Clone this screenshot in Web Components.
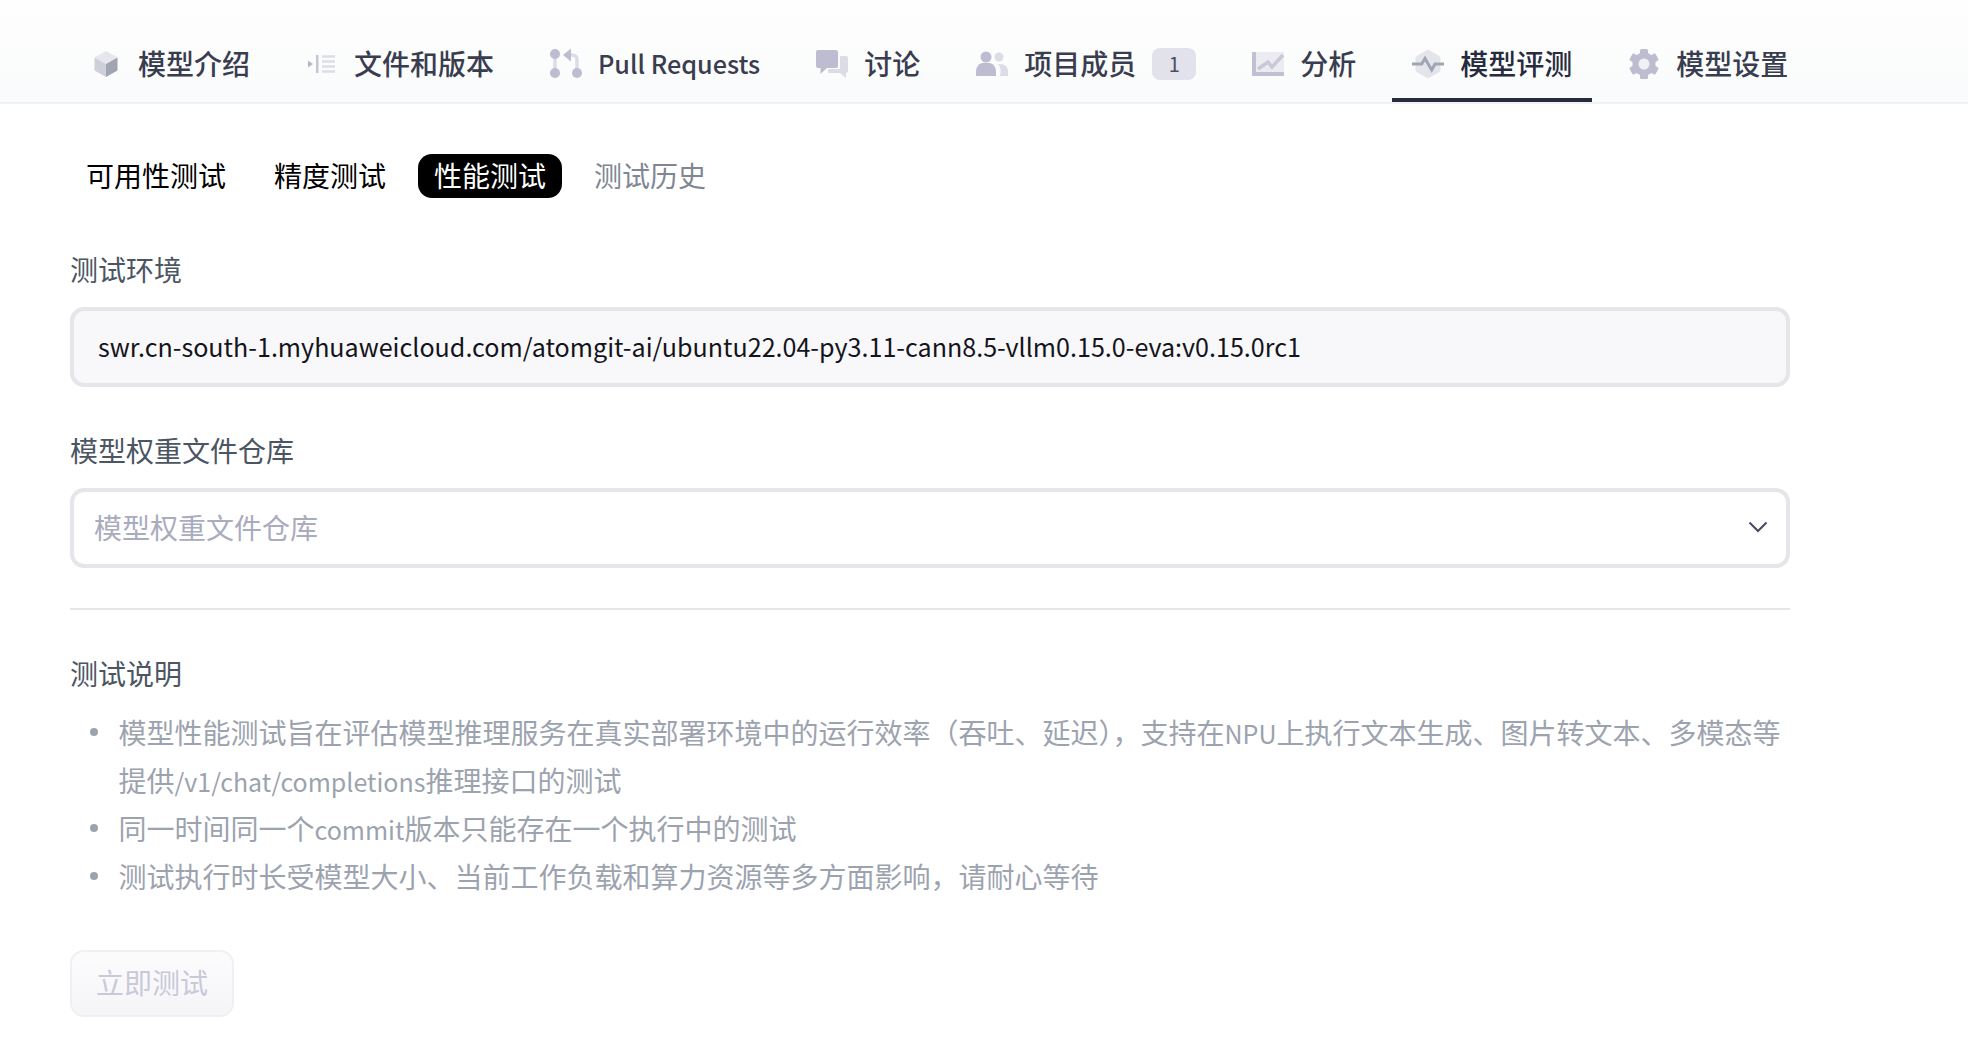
<!DOCTYPE html>
<html lang="zh-CN">
<head>
<meta charset="utf-8">
<title>模型评测</title>
<style>
  body {
    margin: 0;
    background: #fff;
    font-family: "Noto Sans CJK SC", "Noto Sans", sans-serif;
    font-size: 28px;
  }
  svg { display: block; }
  /* latin runs sit smaller than the CJK around them */
  .lat { font-size: 25px; line-height: 1; }
  nav-tab .lat { font-size: 25.2px; vertical-align: 1px; }
</style>
</head>
<body>

<nav-bar>
  <nav-tab>
    <svg slot="icon" width="32" height="32" viewBox="0 0 32 32">
      <path d="M16 3 27.5 9.5 16 16 4.500 9.500Z" fill="#e6e7ec"/>
      <path d="M4.500 9.500 16 16V29L4.500 22.500Z" fill="#cdd0d9"/>
      <path d="M27.500 9.500 16 16V29L27.500 22.500Z" fill="#a0a5b2"/>
    </svg>
    模型介绍
  </nav-tab>
  <nav-tab>
    <svg slot="icon" width="32" height="32" viewBox="0 0 32 32">
      <path d="M2 12.500 7 16 2 19.500Z" fill="#b4b6c4"/>
      <rect x="10" y="7" width="2.500" height="18" fill="#c4c5d3"/>
      <path d="M16 8.500H29M16 13.500H29M16 18.500H29M16 23.500H29" stroke="#dcdde6" stroke-width="2.500"/>
    </svg>
    文件和版本
  </nav-tab>
  <nav-tab>
    <svg slot="icon" width="32" height="32" viewBox="0 0 32 32">
      <path d="M5 6V25" stroke="#dcdce6" stroke-width="3.500"/>
      <path d="M18 7H22Q27 7 27 12V25" fill="none" stroke="#dcdce6" stroke-width="3.500"/>
      <circle cx="5" cy="6" r="5" fill="#bdbcd0"/>
      <circle cx="5" cy="25" r="5" fill="#bdbcd0"/>
      <circle cx="27" cy="25" r="5" fill="#bdbcd0"/>
      <path d="M13 7 21 0.500V13.500Z" fill="#bdbcd0"/>
    </svg>
    <span class="lat">Pull Requests</span>
  </nav-tab>
  <nav-tab>
    <svg slot="icon" width="32" height="32" viewBox="0 0 32 32">
      <path d="M24 8H30Q32 8 32 10V23Q32 25 30 25H30V30L24 25H12V21H24Z" fill="#dcdce6"/>
      <path d="M2 2H20Q22 2 22 4V18Q22 20 20 20H11L4.500 26V20H2Q0 20 0 18V4Q0 2 2 2Z" fill="#bdbcd0"/>
    </svg>
    讨论
  </nav-tab>
  <nav-tab badge="1">
    <svg slot="icon" width="32" height="32" viewBox="0 0 32 32">
      <circle cx="23" cy="9" r="4.500" fill="#dcdce6"/>
      <path d="M22 16Q32 15 32 24V28H24Q26 20 22 16Z" fill="#dcdce6"/>
      <circle cx="10" cy="9" r="5.500" fill="#bdbcd0"/>
      <path d="M0 28V24Q0 17 6 15H14Q20 17 20 24V28Z" fill="#bdbcd0"/>
    </svg>
    项目成员
  </nav-tab>
  <nav-tab>
    <svg slot="icon" width="32" height="32" viewBox="0 0 32 32">
      <rect x="3" y="4" width="29" height="20" fill="#ecebf2"/>
      <path d="M0 4H4V24H32V28H0Z" fill="#c0bfd3"/>
      <path d="M6 21 16 14 20 19 31 7" fill="none" stroke="#c9c8d9" stroke-width="3.500"/>
    </svg>
    分析
  </nav-tab>
  <nav-tab active>
    <svg slot="icon" width="32" height="32" viewBox="0 0 32 32">
      <path d="M16 2 28 9V23L16 30 4 23V9Z" fill="#e4e5ea" stroke="#e4e5ea" stroke-linejoin="round"/>
      <path d="M0 16H9.700L13 10.500 19.700 22 23 16H32" fill="none" stroke="#a0a5b2" stroke-width="3"/>
    </svg>
    模型评测
  </nav-tab>
  <nav-tab>
    <svg slot="icon" width="32" height="32" viewBox="0 0 32 32">
      <g fill="#bdbcd0">
        <rect x="12" y="1" width="8" height="30" rx="1.500"/>
        <rect x="12" y="1" width="8" height="30" rx="1.500" transform="rotate(60 16 16)"/>
        <rect x="12" y="1" width="8" height="30" rx="1.500" transform="rotate(120 16 16)"/>
        <circle cx="16" cy="16" r="11.500"/>
      </g>
      <circle cx="16" cy="16" r="5.500" fill="#f0f0f5"/>
    </svg>
    模型设置
  </nav-tab>
</nav-bar>

<eval-panel>
  <pill-tabs>
    <pill-tab>可用性测试</pill-tab>
    <pill-tab>精度测试</pill-tab>
    <pill-tab active>性能测试</pill-tab>
    <pill-tab muted>测试历史</pill-tab>
  </pill-tabs>

  <form-field label="测试环境">
    <text-box>swr.cn-south-1.myhuaweicloud.com/atomgit-ai/ubuntu22.04-py3.11-cann8.5-vllm0.15.0-eva:v0.15.0rc1</text-box>
  </form-field>

  <form-field label="模型权重文件仓库">
    <select-box placeholder="模型权重文件仓库"></select-box>
  </form-field>

  <note-list label="测试说明">
    <note-item>模型性能测试旨在评估模型推理服务在真实部署环境中的运行效率（吞吐、延迟），支持在<span class="lat">NPU</span>上执行文本生成、图片转文本、多模态等<br>提供<span class="lat">/v1/chat/completions</span>推理接口的测试</note-item>
    <note-item>同一时间同一个<span class="lat">commit</span>版本只能存在一个执行中的测试</note-item>
    <note-item>测试执行时长受模型大小、当前工作负载和算力资源等多方面影响，请耐心等待</note-item>
  </note-list>

  <action-button>立即测试</action-button>
</eval-panel>

<script>
class BaseElement extends HTMLElement {
  constructor() {
    super();
    this.attachShadow({ mode: 'open' });
  }

  connectedCallback() {
    this.render();
  }
}

class NavBar extends BaseElement {
  render() {
    this.shadowRoot.innerHTML = `
      <style>
        :host {
          display: flex;
          gap: 16px;
          height: 102px;
          box-sizing: content-box;
          padding-left: 70px;
          background: linear-gradient(#fefefe, #fafbfc);
          border-bottom: 2px solid #f1f2f5;
        }
      </style>
      <slot></slot>
    `;
  }
}

class NavTab extends BaseElement {
  render() {
    const badge = this.getAttribute('badge');

    this.shadowRoot.innerHTML = `
      <style>
        :host {
          display: flex;
          align-items: center;
          box-sizing: border-box;
          height: 102px;
          padding: 26px 20px 0;
          white-space: nowrap;
          font-size: 28px;
          font-weight: 500;
          color: #3a3c50;
        }
        :host([active]) {
          color: #262b3d;
          box-shadow: inset 0 -4px 0 #262b3d;
        }
        .icon { width: 32px; height: 32px; margin-right: 16px; flex: none; }
        .text { padding-bottom: 2px; }
        .badge {
          width: 44px;
          height: 32px;
          margin-left: 16px;
          border-radius: 8px;
          background: #e2e2ec;
          color: #4a4c60;
          font-size: 20px;
          font-weight: 400;
          line-height: 32px;
          text-align: center;
        }
      </style>
      <span class="icon"><slot name="icon"></slot></span>
      <span class="text"><slot></slot></span>
      ${badge ? `<span class="badge">${badge}</span>` : ''}
    `;
  }
}

class EvalPanel extends BaseElement {
  render() {
    this.shadowRoot.innerHTML = `
      <style>
        :host {
          display: flex;
          flex-direction: column;
          align-items: stretch;
          width: 1720px;
          padding: 50px 0 0 70px;
        }
      </style>
      <slot></slot>
    `;
  }
}

class PillTabs extends BaseElement {
  render() {
    this.shadowRoot.innerHTML = `
      <style>
        :host { display: flex; gap: 16px; margin-bottom: 52px; }
      </style>
      <slot></slot>
    `;
  }
}

class PillTab extends BaseElement {
  render() {
    this.shadowRoot.innerHTML = `
      <style>
        :host {
          display: block;
          height: 44px;
          padding: 0 16px;
          border-radius: 14px;
          font-size: 28px;
          line-height: 42px;
          color: #000;
        }
        :host([active]) { background: #000; color: #fff; }
        :host([muted]) { color: #7f8794; }
      </style>
      <slot></slot>
    `;
  }
}

class FormField extends BaseElement {
  render() {
    const label = this.getAttribute('label') || '';

    this.shadowRoot.innerHTML = `
      <style>
        :host { display: block; margin-bottom: 44px; }
        .label {
          height: 40px;
          margin-bottom: 17px;
          font-size: 28px;
          line-height: 38px;
          color: #4b5563;
        }
      </style>
      <div class="label">${label}</div>
      <slot></slot>
    `;
  }
}

class TextBox extends BaseElement {
  render() {
    this.shadowRoot.innerHTML = `
      <style>
        :host {
          display: block;
          box-sizing: border-box;
          height: 80px;
          padding: 0 24px;
          border: 4px solid #e5e5ea;
          border-radius: 14px;
          background: #f8f8fa;
          font-size: 25.08px;
          line-height: 70px;
          color: #14141c;
          white-space: nowrap;
        }
      </style>
      <slot></slot>
    `;
  }
}

class SelectBox extends BaseElement {
  render() {
    const placeholder = this.getAttribute('placeholder') || '';

    this.shadowRoot.innerHTML = `
      <style>
        :host {
          display: flex;
          align-items: center;
          justify-content: space-between;
          box-sizing: border-box;
          height: 80px;
          margin-bottom: -4px;
          padding: 0 18px 0 20px;
          border: 4px solid #e5e5ea;
          border-radius: 14px;
          background: #fff;
          font-size: 28px;
          color: #a9abbe;
        }
        span { padding-bottom: 2px; }
        svg { margin-bottom: 2px; }
      </style>
      <span>${placeholder}</span>
      <svg width="20" height="12" viewBox="0 0 20 12">
        <path d="M1.500 1.500 10 10 18.500 1.500" fill="none" stroke="#4a4a5e" stroke-width="2"/>
      </svg>
    `;
  }
}

class NoteList extends BaseElement {
  render() {
    const label = this.getAttribute('label') || '';

    this.shadowRoot.innerHTML = `
      <style>
        :host {
          display: block;
          margin-bottom: 50px;
          border-top: 2px solid #e5e5ea;
          padding-top: 44px;
        }
        .label {
          height: 40px;
          margin-bottom: 14px;
          font-size: 28px;
          line-height: 38px;
          color: #4b5563;
        }
      </style>
      <div class="label">${label}</div>
      <slot></slot>
    `;
  }
}

class NoteItem extends BaseElement {
  render() {
    this.shadowRoot.innerHTML = `
      <style>
        :host {
          display: grid;
          grid-template-columns: 48.5px 1fr;
          font-size: 28px;
          line-height: 48px;
          color: #9ca3af;
        }
        .dot {
          width: 8px;
          height: 8px;
          margin: 20px 0 0 20px;
          border-radius: 50%;
          background: #9ca3af;
        }
      </style>
      <span class="dot"></span>
      <span><slot></slot></span>
    `;
  }
}

class ActionButton extends BaseElement {
  render() {
    this.shadowRoot.innerHTML = `
      <style>
        :host {
          display: block;
          align-self: flex-start;
          box-sizing: border-box;
          height: 67px;
          padding: 0 24px;
          border: 2px solid #f0f0f4;
          border-radius: 14px;
          background: linear-gradient(#fcfcfd, #f5f5f8);
          font-size: 28px;
          line-height: 61px;
          color: #c9c9d9;
        }
      </style>
      <slot></slot>
    `;
  }
}

customElements.define('nav-bar', NavBar);
customElements.define('nav-tab', NavTab);
customElements.define('eval-panel', EvalPanel);
customElements.define('pill-tabs', PillTabs);
customElements.define('pill-tab', PillTab);
customElements.define('form-field', FormField);
customElements.define('text-box', TextBox);
customElements.define('select-box', SelectBox);
customElements.define('note-list', NoteList);
customElements.define('note-item', NoteItem);
customElements.define('action-button', ActionButton);
</script>
</body>
</html>
